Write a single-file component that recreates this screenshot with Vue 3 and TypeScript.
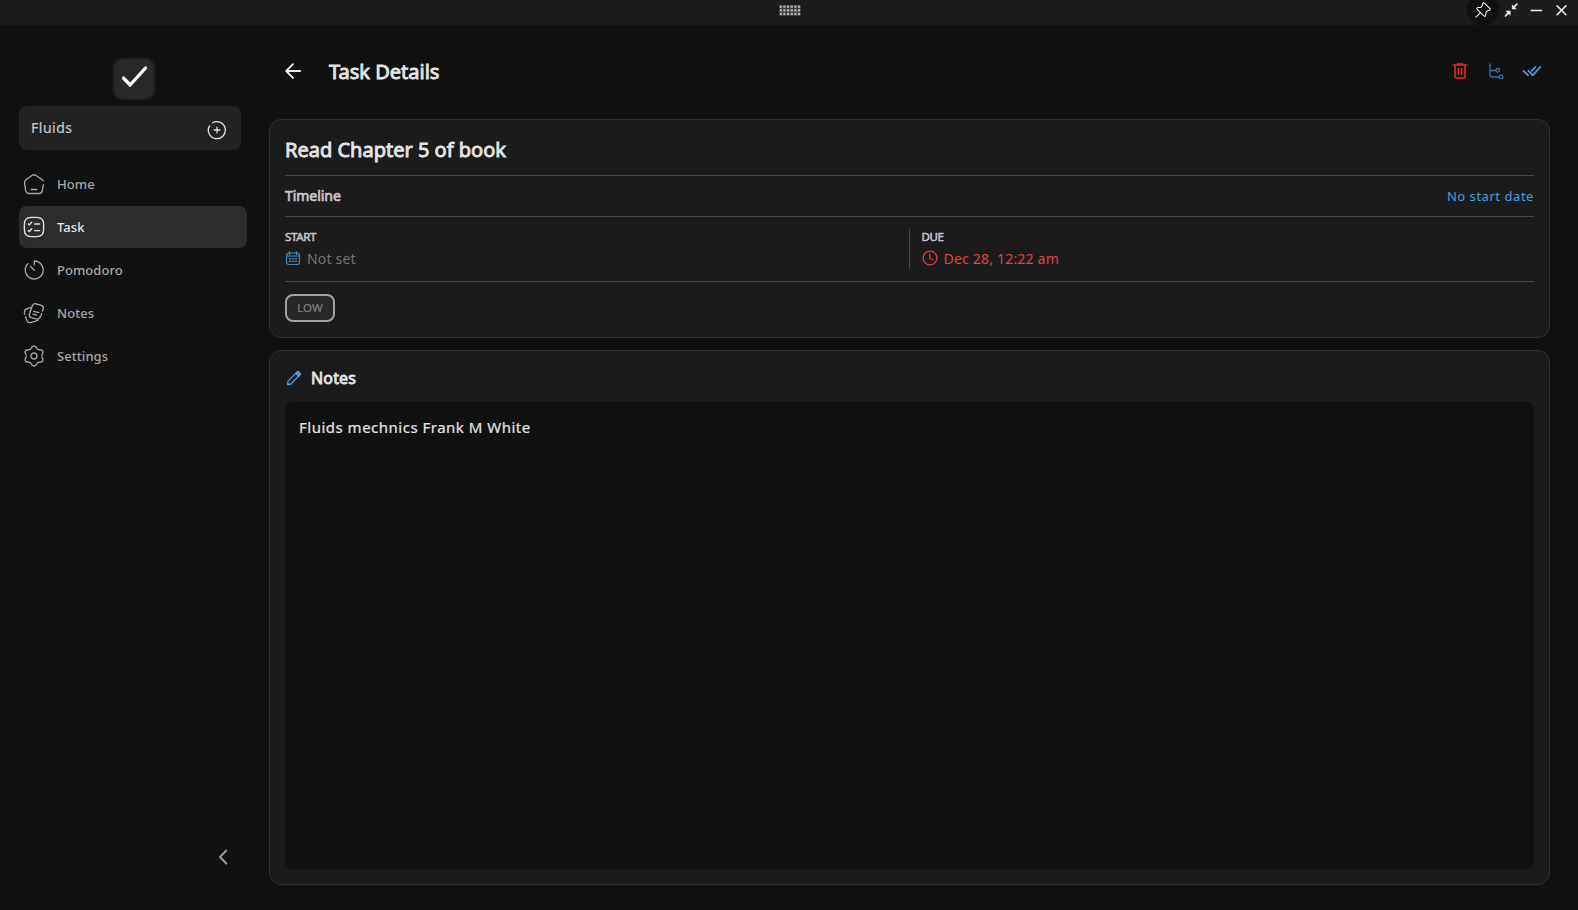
<script setup lang="ts">
interface NavItem {
  label: string
  paths: string[]
  active?: boolean
}

// Six soft lobes around the centre of a 24-unit icon, from one angle to another.
function gearArc(from: number, to: number): string {
  const points: string[] = []
  for (let deg = from; deg <= to; deg += 4) {
    const a = (deg * Math.PI) / 180
    const r = 9.6 + 1.3 * Math.cos(6 * a)
    points.push(`${(12 + r * Math.sin(a)).toFixed(2)} ${(12 - r * Math.cos(a)).toFixed(2)}`)
  }
  return 'M' + points.join('L')
}

const navItems: NavItem[] = [
  {
    label: 'Home',
    paths: [
      'M9 18h6',
      'M22 8.6c-.2-.6-.7-1.1-1.3-1.5L14.2 2.7c-1.3-.9-3.1-.9-4.4 0L3.5 7.1C2.1 8 1.5 9.5 1.7 11.1l1.2 8C3.2 20.9 4.7 22.3 6.5 22.3h11c1.8 0 3.3-1.3 3.6-3.1l1-6.4',
    ],
  },
  {
    label: 'Task',
    active: true,
    paths: [
      'M9 1.5h6c5.4 0 7.5 2.1 7.5 7.5v6c0 5.4-2.1 7.5-7.5 7.5H9c-5.4 0-7.5-2.1-7.5-7.5V9c0-5.4 2.1-7.5 7.5-7.5z',
      'M12.6 8.7h5.6M5.9 8.7l1 1 2.6-2.9M12.6 15.9h5.6M5.9 15.9l1 1 2.6-2.9',
    ],
  },
  {
    label: 'Pomodoro',
    paths: [
      'M12.3 6.3V2.2a9.8 9.8 0 1 1-7 2.9',
      'M12.2 12.2L8 7.8',
    ],
  },
  {
    label: 'Notes',
    paths: [
      'M21.3 9.8l.8-2.8c.3-1.5-.4-2.7-2-3.3l-6.3-1.8c-2-.4-3.1.4-3.6 2.3L7 13.2c-.5 2 .1 3.2 1.9 3.8l4.2 1.2c3.600.8 5.300.2 6.400-3.300l.9-2.500',
      'M8.700 6.200L5.200 7C2.400 7.800 1.300 9.200 1.600 11.600l.3 1.700M2.800 16l1.200 3.500c.8 2.400 2.400 3.400 4.800 2.800l4.300-1.200 3.800-1.600',
      'M11.700 10.200l5.600 1.400M10.700 13.300l3.800.9',
    ],
  },
  {
    label: 'Settings',
    paths: [
      'M12 8.700a3.300 3.300 0 1 0 0 6.600 3.300 3.300 0 0 0 0-6.600z',
      gearArc(-82, 88),
      gearArc(98, 268),
    ],
  },
]
</script>

<template>
  <div class="window">
    <header class="titlebar">
      <svg class="grip" width="22" height="11" viewBox="0 0 22 11">
        <rect class="grip-base" x="0.5" y="0.3" width="21" height="10.4" />
        <template v-for="row in 3" :key="row">
          <rect v-for="col in 6" :key="col" :x="col * 3.65 - 3" :y="row * 3.7 - 3.2" width="2.3" height="2.3" />
        </template>
      </svg>
      <div class="window-controls">
        <button class="control pin" aria-label="Pin">
          <svg width="18" height="18" viewBox="0 0 24 24">
            <path d="M13.800 2.900l7.400 7.300c1.100 1.100.5 2-.8 2.200-1.500.3-2.500.5-3.800 1.800-1.300 1.300-.7 3.100-.9 4.700-.3 1.900-1.600 2-2.900.7L4.600 11.400c-1.200-1.200-1.200-2.600.8-2.800 1.500-.1 3.200.4 4.500-.9 1.300-1.300 1.500-2.400 1.800-3.900.2-1.300 1-2 2.100-.9zM8.600 15.400L2.500 21.500" />
          </svg>
        </button>
        <button class="control" aria-label="Restore">
          <svg class="solid" width="14" height="14" viewBox="0 0 14 14">
            <path d="M7.900 6.200V1.300l1.700 1.700L13 .1l.9.9L11 4.400l1.800 1.800zM6.500 7.800v4.900L4.800 11l-3.400 2.900-.9-.9L3.400 9.600 1.600 7.800z" />
          </svg>
        </button>
        <button class="control" aria-label="Minimize">
          <svg width="14" height="14" viewBox="0 0 14 14"><path d="M2.200 7.500h10.400" /></svg>
        </button>
        <button class="control" aria-label="Close">
          <svg width="14" height="14" viewBox="0 0 14 14"><path d="M3.100 2.900l8.800 8.800M11.900 2.900l-8.800 8.800" /></svg>
        </button>
      </div>
    </header>

    <div class="body">
      <aside class="sidebar">
        <div class="logo">
          <svg width="40" height="40" viewBox="0 0 40 40"><path d="M9.500 19l6.600 7L31.500 9" /></svg>
        </div>
        <div class="project">
          <span>Fluids</span>
          <svg width="20" height="20" viewBox="0 0 20 20">
            <path d="M5.600 2.800A8.500 8.500 0 1 1 2.500 5.900M10 7.200v5.600M7.200 10h5.600" />
          </svg>
        </div>
        <nav>
          <a v-for="item in navItems" :key="item.label" class="nav-item" :class="{ active: item.active }">
            <svg width="22" height="22" viewBox="0 0 24 24">
              <path v-for="d in item.paths" :key="d" :d="d" />
            </svg>
            <span>{{ item.label }}</span>
          </a>
        </nav>
        <svg class="collapse" width="12" height="16" viewBox="0 0 12 16"><path d="M9.300 1.500L3 8l6.300 6.500" /></svg>
      </aside>

      <main class="content">
        <div class="page-head">
          <svg class="back" width="16" height="16" viewBox="0 0 16 16"><path d="M15.200 8H1.500M8 1.200L1.200 8 8 14.800" /></svg>
          <h1>Task Details</h1>
          <div class="actions">
            <svg class="delete" width="16" height="18" viewBox="0 0 16 18">
              <path d="M1.500 3h13M5.500 2.200h5M3 3v11.500q0 1.500 1.500 1.500h7q1.500 0 1.500-1.500V3M6.400 6.500v6M9.600 6.500v6" />
            </svg>
            <svg class="subtasks" width="16" height="16" viewBox="0 0 16 16">
              <path d="M2 1v11q0 2 2 2h7M2 7.500h6" />
              <circle cx="9.700" cy="7.300" r="1.800" />
              <circle cx="13" cy="14" r="1.800" />
            </svg>
            <svg class="complete" width="20" height="14" viewBox="0 0 20 14">
              <path d="M1.500 6.900L6 11.400M6.500 6.900L10.700 11.400 18.300 2.900M9.800 6.900L13.500 2.900" />
            </svg>
          </div>
        </div>

        <section class="card details">
          <h2>Read Chapter 5 of book</h2>
          <div class="timeline">
            <strong>Timeline</strong>
            <span>No start date</span>
          </div>
          <div class="dates">
            <div class="date start">
              <b>START</b>
              <div class="value">
                <svg width="16" height="16" viewBox="0 0 16 16">
                  <path d="M4 3h8q2.500 0 2.500 2.500v6.500q0 2.500-2.500 2.500H4q-2.500 0-2.500-2.500V5.500Q1.500 3 4 3zM1.500 6h13M4.500 1.500v3M11.500 1.500v3" />
                  <path d="M4.300 8.800h1.500M7.300 8.800h1.500M10.200 8.800h1.500M4.300 11.300h1.500M7.300 11.300h1.500M10.200 11.300h1.500" />
                </svg>
                <span>Not set</span>
              </div>
            </div>
            <div class="date due">
              <b>DUE</b>
              <div class="value">
                <svg width="16" height="16" viewBox="0 0 16 16"><circle cx="8" cy="8" r="6.900" /><path d="M7.800 4v4.200L11 9.800" /></svg>
                <span>Dec 28, 12:22 am</span>
              </div>
            </div>
          </div>
          <span class="priority">LOW</span>
        </section>

        <section class="card notes">
          <div class="notes-head">
            <svg width="16" height="16" viewBox="0 0 16 16">
              <path d="M1.500 14.500l.5-3.400L11 2.100q1-.9 2.100.1l.7.7q.9 1 0 2L4.900 14z" />
              <path class="tip" d="M9.800 3.300l2-1.800 2.700 2.700-1.800 2z" />
            </svg>
            <h3>Notes</h3>
          </div>
          <div class="editor">Fluids mechnics Frank M White</div>
        </section>
      </main>
    </div>
  </div>
</template>

<style>
body {
  background: #111;
}
</style>

<style scoped>
.window {
  box-sizing: border-box;
  width: 1578px;
  height: 910px;
  display: flex;
  flex-direction: column;
  background: #111;
  color: #e4e4e4;
  font-family: 'Noto Sans', sans-serif;
  overflow: hidden;
}
svg {
  display: block;
  flex: none;
  fill: none;
  stroke: currentColor;
  stroke-width: 1.5;
  stroke-linecap: round;
  stroke-linejoin: round;
}
h1, h2, h3 {
  margin: 0;
  font-weight: 400;
}
.titlebar {
  flex: none;
  height: 25px;
  display: grid;
  grid-template-columns: 1fr 22px 1fr;
  background: #1b1b1b;
}
.grip {
  grid-column: 2;
  margin: 5px 0 0 1px;
  fill: #b4b4b4;
  stroke: none;
}
.grip-base {
  fill: #3c3c3c;
}
.window-controls {
  display: flex;
  justify-content: flex-end;
  padding-right: 5px;
  height: 25px;
  overflow: hidden;
}
.control {
  flex: none;
  width: 25px;
  height: 20px;
  padding: 0;
  display: flex;
  align-items: center;
  justify-content: center;
  border: 0;
  background: none;
  color: #eee;
}
.pin {
  width: 32px;
  height: 32px;
  margin-top: -6px;
  margin-right: -1px;
  border-radius: 50%;
  background: #111;
}
.solid {
  fill: currentColor;
  stroke: none;
}
.body {
  flex: 1;
  display: flex;
  min-height: 0;
}
.sidebar {
  width: 250px;
  flex: none;
  box-sizing: border-box;
  padding: 34px 3px 45px 19px;
  display: flex;
  flex-direction: column;
}
.logo {
  align-self: center;
  width: 40px;
  height: 40px;
  margin-left: 1px;
  border-radius: 9px;
  background: #28282a;
  box-shadow: 0 0 0 2px #19191b;
  color: #fff;
}
.logo svg {
  stroke-width: 3.3;
}
.project {
  flex: none;
  box-sizing: border-box;
  width: 222px;
  height: 44px;
  margin-top: 7px;
  padding: 0 14px 0 12px;
  display: flex;
  align-items: center;
  justify-content: space-between;
  border-radius: 8px;
  background: #222;
  font-size: 14px;
  letter-spacing: 0.5px;
  color: #cac4d0;
}
.project span {
  margin-bottom: 2px;
  -webkit-text-stroke: 0.2px;
}
.project svg {
  margin-top: 4px;
  color: #e6e0e9;
  stroke-width: 1.3;
}
nav {
  display: flex;
  flex-direction: column;
  gap: 1px;
  margin-top: 13px;
}
.nav-item {
  height: 42px;
  display: flex;
  align-items: center;
  gap: 12px;
  padding-left: 4px;
  border-radius: 8px;
  font-size: 13px;
  font-weight: 500;
  letter-spacing: 0.06px;
  color: #a5a5a5;
}
.active {
  background: #2c2c2c;
  color: #e4e4e4;
}
.collapse {
  margin: auto 18px 0 auto;
  color: #999;
  stroke-width: 2;
}
.content {
  flex: 1;
  box-sizing: border-box;
  padding: 0 28px 25px 19px;
  display: flex;
  flex-direction: column;
}
.page-head {
  height: 94px;
  flex: none;
  display: flex;
  align-items: center;
  padding: 0 8px 2px 16px;
  box-sizing: border-box;
}
.back {
  color: #eee;
  stroke-width: 1.8;
}
h1 {
  margin-left: 28px;
  font-size: 20px;
  -webkit-text-stroke: 0.9px;
}
.actions {
  display: flex;
  align-items: center;
  gap: 20px;
  margin-left: auto;
}
.delete {
  color: #d32f2f;
  stroke-width: 1.7;
}
.subtasks {
  color: #2f78aa;
  stroke-width: 1.3;
}
.complete {
  margin-left: -2px;
  color: #4a9eda;
  stroke-width: 1.7;
}
.card {
  box-sizing: border-box;
  padding: 15px;
  border: 1px solid #303030;
  border-radius: 12px;
  background: #1b1b1b;
}
.details {
  height: 219px;
  flex: none;
}
h2 {
  height: 40px;
  border-bottom: 1px solid #47464b;
  font-size: 20px;
  line-height: 29px;
  -webkit-text-stroke: 0.9px;
}
.timeline {
  height: 40px;
  display: flex;
  align-items: center;
  justify-content: space-between;
  border-bottom: 1px solid #47464b;
  font-size: 13px;
  letter-spacing: 0.54px;
}
.timeline strong {
  margin-bottom: 1px;
  font-size: 14px;
  font-weight: 400;
  letter-spacing: -0.05px;
  color: #cac4d0;
  -webkit-text-stroke: 0.7px;
}
.timeline span {
  color: #4a9eda;
}
.dates {
  height: 65px;
  box-sizing: border-box;
  display: flex;
  padding: 12px 0;
  border-bottom: 1px solid #47464b;
}
.date {
  flex: none;
  width: 50%;
  box-sizing: border-box;
}
.due {
  margin-left: -1px;
  border-left: 1px solid #47464b;
  padding-left: 12px;
}
.date b {
  display: block;
  font-size: 11.5px;
  font-weight: 400;
  line-height: 16px;
  letter-spacing: -0.35px;
  color: #cac4d0;
  -webkit-text-stroke: 0.5px;
}
.value {
  display: flex;
  align-items: center;
  gap: 6px;
  height: 24px;
  margin-top: 1px;
  font-size: 14px;
  letter-spacing: 0.2px;
}
.value svg {
  stroke-width: 1.2;
}
.start svg {
  color: #3f8bbf;
}
.start span {
  color: #777;
}
.due .value {
  color: #e0403f;
}
.priority {
  box-sizing: border-box;
  width: 50px;
  height: 28px;
  margin-top: 12px;
  padding-bottom: 1px;
  display: flex;
  align-items: center;
  justify-content: center;
  border: 2px solid #9ca3af;
  border-radius: 8px;
  background: #272727;
  font-size: 11.5px;
  color: #7c808a;
  -webkit-text-stroke: 0.2px;
}
.notes {
  flex: 1;
  display: flex;
  flex-direction: column;
  margin-top: 12px;
}
.notes-head {
  height: 24px;
  display: flex;
  align-items: center;
  gap: 9px;
  padding-left: 1px;
}
.notes-head svg {
  color: #4a9eda;
  stroke-width: 1.3;
}
.tip {
  fill: currentColor;
}
h3 {
  font-size: 16px;
  line-height: 24px;
  letter-spacing: 0.15px;
  -webkit-text-stroke: 0.8px;
}
.editor {
  flex: 1;
  margin-top: 12px;
  padding: 13px 14px 15px;
  border-radius: 8px;
  background: #111;
  font-size: 15px;
  line-height: 24px;
  letter-spacing: 0.5px;
  -webkit-text-stroke: 0.2px;
}
</style>
